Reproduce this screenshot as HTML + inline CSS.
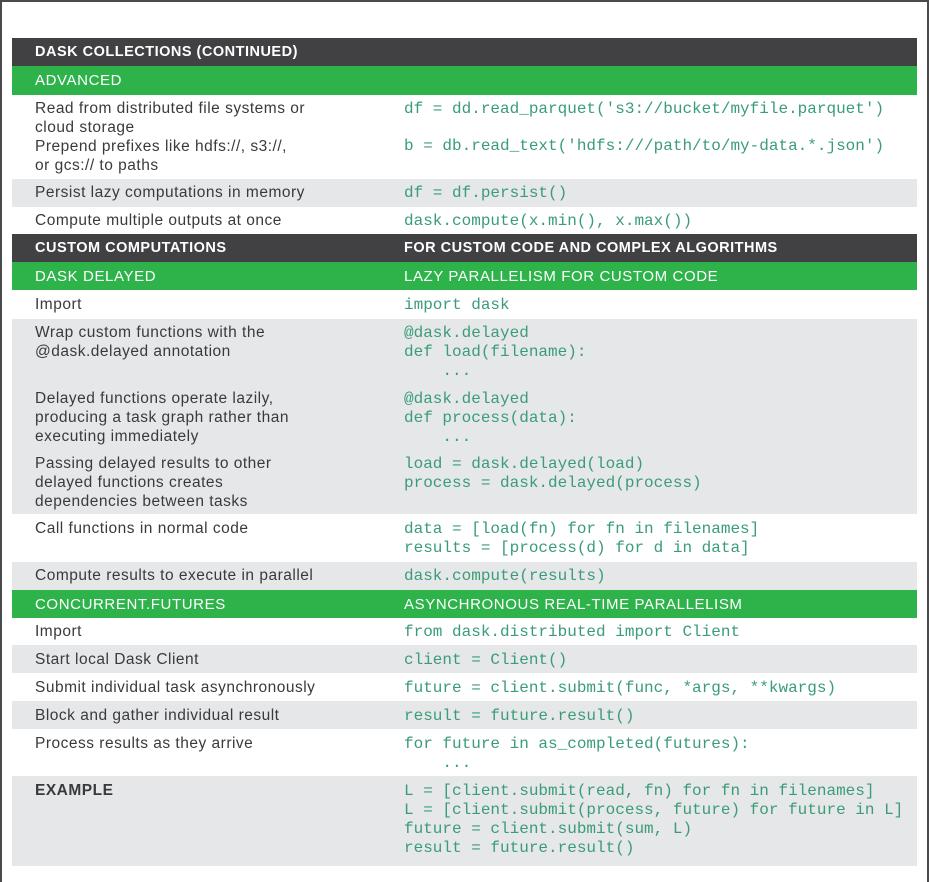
<!DOCTYPE html>
<html><head><meta charset="utf-8"><style>
html,body{margin:0;padding:0;background:#fff;}
body{width:929px;height:859px;position:relative;overflow:hidden;font-family:"Liberation Sans",Arial,sans-serif;}
.frame{position:absolute;left:0;top:0;width:925px;height:880px;border:2px solid #4a4a4c;border-bottom:none;}
.r{position:absolute;left:12px;width:905px;}
.dk{background:#414143;}
.gr{background:#2db34a;}
.gy{background:#e6e7e8;}
.t{position:absolute;font-size:15.5px;letter-spacing:0.5px;line-height:19px;color:#3a3a3c;white-space:pre;}
.h{position:absolute;font-size:14.5px;letter-spacing:0.5px;line-height:19px;color:#fff;font-weight:bold;white-space:pre;}
.g{position:absolute;font-size:15px;letter-spacing:0.6px;line-height:19px;color:#fff;white-space:pre;}
.c{position:absolute;font-family:"Liberation Mono",monospace;font-size:16px;line-height:19px;color:#3a9c78;white-space:pre;letter-spacing:0;}
.L{left:35px}.R{left:404px}
</style></head><body>
<div class="frame"></div>
<div class="r dk" style="top:38px;height:28px"></div>
<div class="r gr" style="top:66px;height:29px"></div>
<div class="r gy" style="top:179px;height:28px"></div>
<div class="r dk" style="top:234px;height:28px"></div>
<div class="r gr" style="top:262px;height:28px"></div>
<div class="r gy" style="top:319px;height:195px"></div>
<div class="r gy" style="top:562px;height:28px"></div>
<div class="r gr" style="top:590px;height:28px"></div>
<div class="r gy" style="top:645px;height:28px"></div>
<div class="r gy" style="top:701px;height:28px"></div>
<div class="r gy" style="top:776px;height:90px"></div>

<div class="h L" style="top:43px">DASK COLLECTIONS (CONTINUED)</div>
<div class="g L" style="top:71px">ADVANCED</div>

<div class="t L" style="top:99px">Read from distributed file systems or
cloud storage
Prepend prefixes like hdfs://, s3://,
or gcs:// to paths</div>
<div class="c R" style="top:100px">df = dd.read_parquet('s3://bucket/myfile.parquet')</div>
<div class="c R" style="top:137px">b = db.read_text('hdfs:///path/to/my-data.*.json')</div>

<div class="t L" style="top:183px">Persist lazy computations in memory</div>
<div class="c R" style="top:184px">df = df.persist()</div>
<div class="t L" style="top:211px">Compute multiple outputs at once</div>
<div class="c R" style="top:212px">dask.compute(x.min(), x.max())</div>

<div class="h L" style="top:239px">CUSTOM COMPUTATIONS</div>
<div class="h R" style="top:239px">FOR CUSTOM CODE AND COMPLEX ALGORITHMS</div>
<div class="g L" style="top:267px">DASK DELAYED</div>
<div class="g R" style="top:267px">LAZY PARALLELISM FOR CUSTOM CODE</div>

<div class="t L" style="top:295px">Import</div>
<div class="c R" style="top:296px">import dask</div>

<div class="t L" style="top:323px">Wrap custom functions with the
@dask.delayed annotation</div>
<div class="c R" style="top:324px">@dask.delayed
def load(filename):
    ...</div>
<div class="t L" style="top:389px">Delayed functions operate lazily,
producing a task graph rather than
executing immediately</div>
<div class="c R" style="top:390px">@dask.delayed
def process(data):
    ...</div>
<div class="t L" style="top:454px">Passing delayed results to other
delayed functions creates
dependencies between tasks</div>
<div class="c R" style="top:455px">load = dask.delayed(load)
process = dask.delayed(process)</div>

<div class="t L" style="top:519px">Call functions in normal code</div>
<div class="c R" style="top:520px">data = [load(fn) for fn in filenames]
results = [process(d) for d in data]</div>

<div class="t L" style="top:566px">Compute results to execute in parallel</div>
<div class="c R" style="top:567px">dask.compute(results)</div>

<div class="g L" style="top:595px">CONCURRENT.FUTURES</div>
<div class="g R" style="top:595px">ASYNCHRONOUS REAL-TIME PARALLELISM</div>

<div class="t L" style="top:622px">Import</div>
<div class="c R" style="top:623px">from dask.distributed import Client</div>
<div class="t L" style="top:650px">Start local Dask Client</div>
<div class="c R" style="top:651px">client = Client()</div>
<div class="t L" style="top:678px">Submit individual task asynchronously</div>
<div class="c R" style="top:679px">future = client.submit(func, *args, **kwargs)</div>
<div class="t L" style="top:706px">Block and gather individual result</div>
<div class="c R" style="top:707px">result = future.result()</div>
<div class="t L" style="top:734px">Process results as they arrive</div>
<div class="c R" style="top:735px">for future in as_completed(futures):
    ...</div>

<div class="t L" style="top:781px;font-weight:bold">EXAMPLE</div>
<div class="c R" style="top:782px">L = [client.submit(read, fn) for fn in filenames]
L = [client.submit(process, future) for future in L]
future = client.submit(sum, L)
result = future.result()</div>
</body></html>
